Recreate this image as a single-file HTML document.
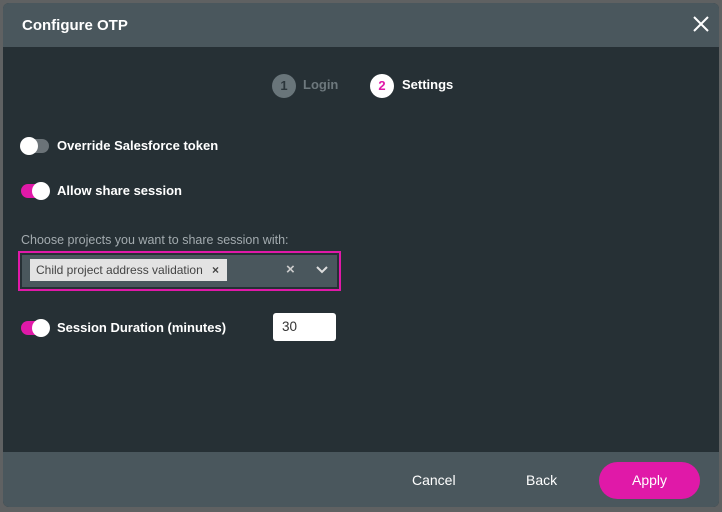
<!DOCTYPE html>
<html><head><style>
*{margin:0;padding:0;box-sizing:border-box}
body{width:722px;height:512px;background:#5f6162;font-family:"Liberation Sans",sans-serif;position:relative;overflow:hidden}
.dlg{position:absolute;left:3px;top:3px;width:716px;height:504px;background:#263035;border-radius:6px;overflow:hidden}
.hdr{position:absolute;left:0;top:0;width:100%;height:44px;background:#4a575d}
.hdr .t{position:absolute;left:19px;top:14px;color:#fff;font-weight:bold;font-size:15px}
.ftr{position:absolute;left:0;top:449px;width:100%;height:55px;background:#4a575d}
.a{position:absolute;color:#fff;font-size:14px}
.tg{position:absolute;width:28px;height:14px;border-radius:7px}
.tg i{position:absolute;top:-2px;width:18px;height:18px;border-radius:50%;background:#fff}
</style></head><body>
<div class="dlg">
<div class="hdr"><div class="t">Configure OTP</div>
<svg style="position:absolute;left:690px;top:13px" width="16" height="16"><path d="M1 1L15 15M15 1L1 15" stroke="#fff" stroke-width="2"/></svg></div>
<div style="position:absolute;left:269px;top:71px;width:24px;height:24px;border-radius:50%;background:#69757a;color:#2b363b;font-weight:bold;font-size:13px;text-align:center;line-height:24px">1</div>
<div class="a" style="left:300px;top:74px;color:#6d787d;font-weight:bold;font-size:13px">Login</div>
<div style="position:absolute;left:367px;top:71px;width:24px;height:24px;border-radius:50%;background:#fff;color:#e019a8;font-weight:bold;font-size:13px;text-align:center;line-height:24px">2</div>
<div class="a" style="left:399px;top:74px;font-weight:bold;font-size:13px">Settings</div>

<div class="tg" style="left:18px;top:136px;background:#6b7378"><i style="left:-1px"></i></div>
<div class="a" style="left:54px;top:135px;font-weight:bold;font-size:13px">Override Salesforce token</div>
<div class="tg" style="left:18px;top:181px;background:#e019a8"><i style="left:11px"></i></div>
<div class="a" style="left:54px;top:180px;font-weight:bold;font-size:13px">Allow share session</div>
<div class="a" style="left:18px;top:230px;color:#a3abaf;font-size:12.5px">Choose projects you want to share session with:</div>
<div style="position:absolute;left:15px;top:248px;width:323px;height:40px;border:2px solid #e019a8;background:#263035;padding:2px">
<div style="width:100%;height:100%;background:#4a575d"></div></div>
<div style="position:absolute;left:27px;top:256px;width:197px;height:22px;background:#e3e3e3;color:#444;font-size:12px;line-height:22px;padding-left:6px">Child project address validation<span style="position:absolute;left:182px;font-weight:bold;font-size:12px">×</span></div>
<div class="a" style="left:283px;top:258px;color:#ccc;font-weight:bold;font-size:15px">×</div>
<svg style="position:absolute;left:313px;top:263px" width="12" height="8"><path d="M1 1L6 6L11 1" stroke="#ddd" stroke-width="2" fill="none"/></svg>
<div class="tg" style="left:18px;top:318px;background:#e019a8"><i style="left:11px"></i></div>
<div class="a" style="left:54px;top:317px;font-weight:bold;font-size:13px">Session Duration (minutes)</div>
<div style="position:absolute;left:270px;top:310px;width:63px;height:28px;background:#fff;border-radius:3px;color:#333;font-size:13.5px;line-height:28px;padding-left:9px">30</div>
<div class="ftr">
<div class="a" style="left:409px;top:20px">Cancel</div>
<div class="a" style="left:523px;top:20px">Back</div>
<div style="position:absolute;left:596px;top:10px;width:101px;height:37px;border-radius:19px;background:#e019a8;color:#fff;font-size:14px;text-align:center;line-height:37px">Apply</div>
</div>
</div>
</body></html>
